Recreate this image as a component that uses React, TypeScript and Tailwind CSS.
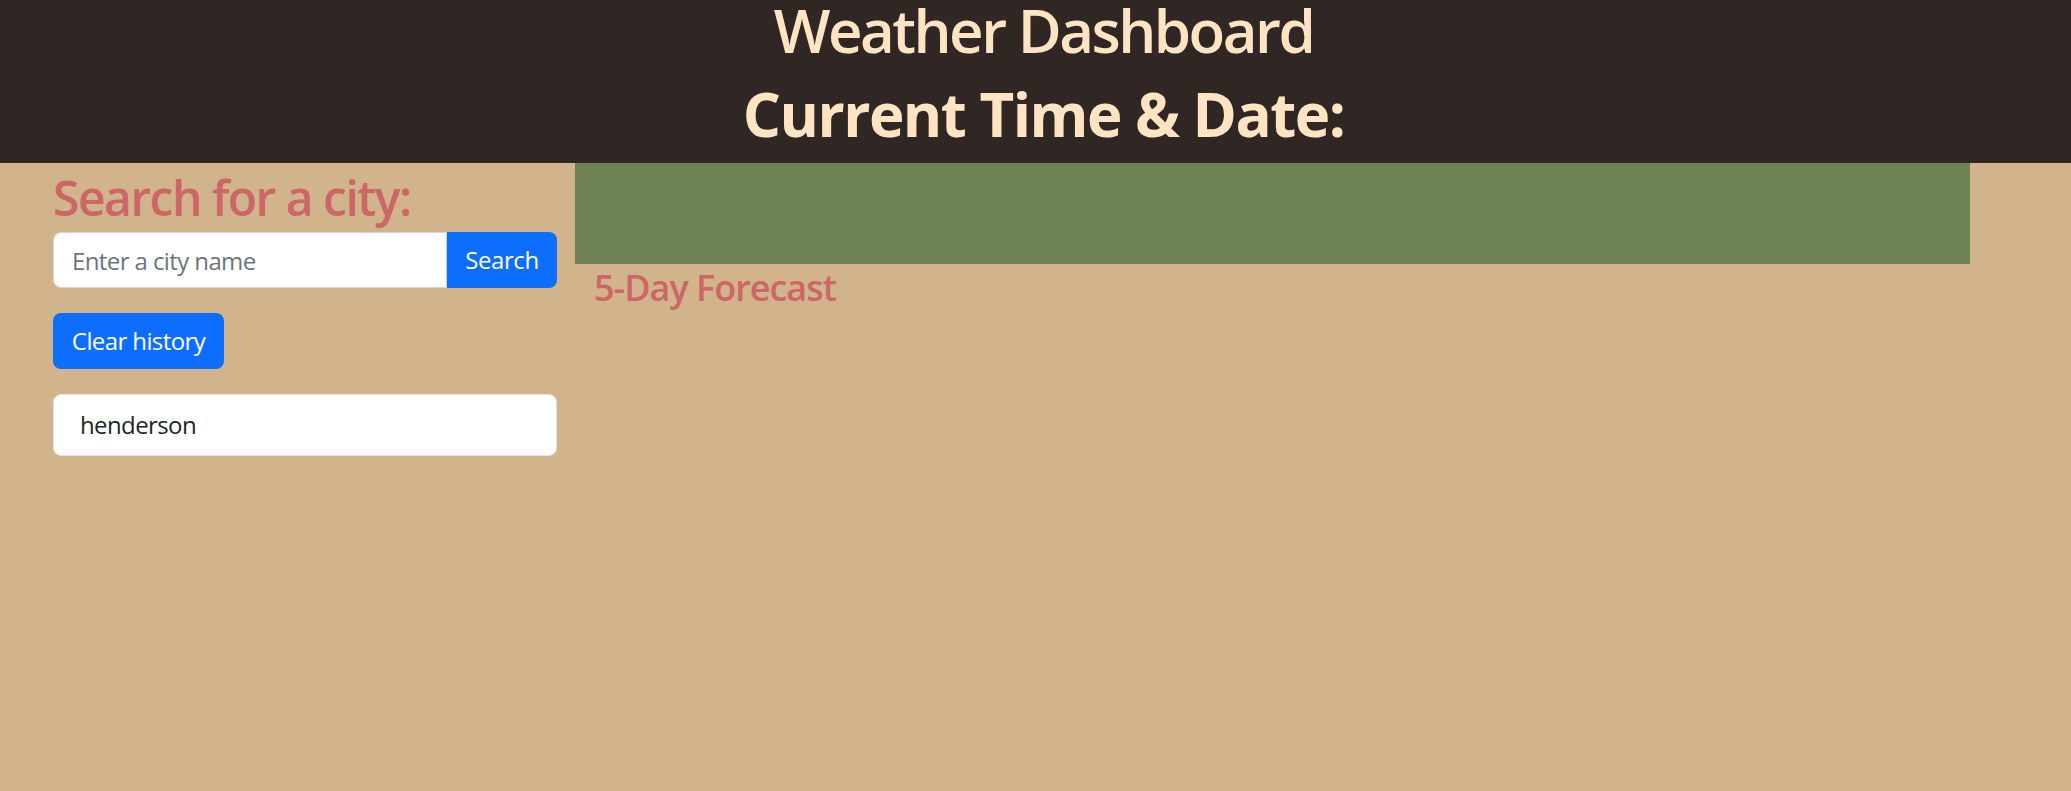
const FONT = "font-['Open_Sans','Noto_Sans',sans-serif]";

function Header() {
  return (
    <header className="flex h-[163px] flex-col items-center bg-[#302725] pl-[16px] text-[#ffe4c4]">
      <h1 className="text-[60px] leading-[60px] font-semibold tracking-[-2.5px]">Weather Dashboard</h1>
      <h2 className="mt-[18px] text-[60px] leading-[72px] font-bold tracking-[-1.5px]">Current Time &amp; Date:</h2>
    </header>
  );
}

function SearchPanel() {
  return (
    <aside className="flex w-[504px] flex-col">
      <h2 className="mt-[6px] text-[48px] leading-[58px] font-semibold tracking-[-1.5px] text-[#cd6666]">
        Search for a city:
      </h2>
      <div className="mt-[5px] flex h-[56px]">
        <input
          className="h-full flex-1 rounded-l-[8px] border-[1.5px] border-[#ced4da] bg-white px-[18px] text-[24px] tracking-[-0.6px] text-[#212529] placeholder:text-[#6c757d] outline-none"
          placeholder="Enter a city name"
        />
        <button className="h-full w-[110px] rounded-r-[8px] bg-[#0d6efd] text-[24px] tracking-[-0.4px] text-white">
          Search
        </button>
      </div>
      <button className="mt-[25px] h-[56px] w-[171px] rounded-[8px] bg-[#0d6efd] text-[24px] tracking-[-0.6px] text-white">
        Clear history
      </button>
      <ul className="mt-[25px]">
        <li className="flex h-[62px] items-center rounded-[8px] border-[1.5px] border-[#dee2e6] bg-white px-[26px] text-[24px] tracking-[-0.6px] text-[#212529]">
          henderson
        </li>
      </ul>
    </aside>
  );
}

function ForecastPanel() {
  return (
    <section className="ml-[18px] flex w-[1395px] flex-col">
      <div className="h-[101px] bg-[#6e8253]" />
      <h4 className="mt-[2px] pl-[19px] text-[36px] leading-[44px] font-semibold tracking-[-1px] text-[#cd6666]">
        5-Day Forecast
      </h4>
    </section>
  );
}

export default function App() {
  return (
    <div className={`min-h-[791px] bg-[#d2b48c] ${FONT}`}>
      <Header />
      <main className="flex pl-[53px]">
        <SearchPanel />
        <ForecastPanel />
      </main>
    </div>
  );
}
